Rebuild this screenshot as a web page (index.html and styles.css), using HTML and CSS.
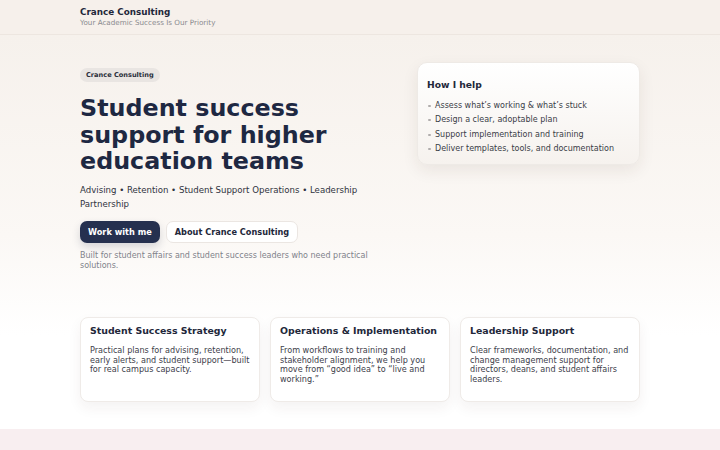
FILE: index.html
```html
<!DOCTYPE html>
<html lang="en">
<head>
<meta charset="utf-8">
<title>Crance Consulting</title>
<link rel="stylesheet" href="styles.css">
</head>
<body>
<header class="site-header">
  <div class="container">
    <div class="brand">Crance Consulting</div>
    <div class="tagline">Your Academic Success Is Our Priority</div>
  </div>
</header>
<main>
  <section class="hero">
    <div class="container hero-grid">
      <div class="hero-main">
        <span class="pill">Crance Consulting</span>
        <h1>Student success support for higher education teams</h1>
        <p class="lead">Advising • Retention • Student Support Operations • Leadership Partnership</p>
        <div class="actions">
          <a class="btn btn-primary" href="#">Work with me</a>
          <a class="btn btn-secondary" href="#">About Crance Consulting</a>
        </div>
        <p class="note">Built for student affairs and student success leaders who need practical solutions.</p>
      </div>
      <aside class="help-card">
        <h2>How I help</h2>
        <ul>
          <li>Assess what’s working &amp; what’s stuck</li>
          <li>Design a clear, adoptable plan</li>
          <li>Support implementation and training</li>
          <li>Deliver templates, tools, and documentation</li>
        </ul>
      </aside>
    </div>
    <div class="container features">
      <div class="feature">
        <h3>Student Success Strategy</h3>
        <p>Practical plans for advising, retention, early alerts, and student support—built for real campus capacity.</p>
      </div>
      <div class="feature">
        <h3>Operations &amp; Implementation</h3>
        <p>From workflows to training and stakeholder alignment, we help you move from “good idea” to “live and working.”</p>
      </div>
      <div class="feature">
        <h3>Leadership Support</h3>
        <p>Clear frameworks, documentation, and change management support for directors, deans, and student affairs leaders.</p>
      </div>
    </div>
  </section>
  <section class="band"></section>
</main>
</body>
</html>
```
FILE: styles.css
```css
* { box-sizing: border-box; }
html, body { margin: 0; padding: 0; }
body {
  font-family: "DejaVu Sans", "Liberation Sans", sans-serif;
  color: #2b2f3a;
  background: #ffffff;
}
.container {
  width: 560px;
  margin: 0 auto;
}
.site-header {
  background: #f6f0eb;
  border-bottom: 1px solid #ede6e0;
  height: 35px;
  padding-top: 6px;
}
.brand {
  font-size: 8.8px;
  font-weight: bold;
  color: #22273a;
  line-height: 12px;
}
.tagline {
  font-size: 7.2px;
  color: #8a8a8f;
  line-height: 10px;
}
.hero {
  background: linear-gradient(180deg, #f6f1ec 0px, #fbf8f5 200px, #ffffff 300px);
  padding-top: 27px;
  padding-bottom: 27px;
}
.hero-grid {
  display: grid;
  grid-template-columns: 1fr 223px;
  column-gap: 40px;
  align-items: start;
}
.hero-main {
  padding-top: 6px;
  display: flex;
  flex-direction: column;
  align-items: flex-start;
}
.pill {
  display: block;
  background: #e9e5e2;
  color: #2b2f3a;
  font-size: 6.6px;
  font-weight: bold;
  padding: 3px 6px;
  border-radius: 8px;
  line-height: 8px;
}
h1 {
  margin: 13.2px 0 0;
  font-size: 23.8px;
  line-height: 26.5px;
  color: #1e2842;
  font-weight: bold;
}
.lead {
  margin: 8.3px 0 0;
  font-size: 8.6px;
  line-height: 14px;
  color: #2f3340;
}
.actions {
  display: flex;
  gap: 6px;
  margin-top: 10px;
}
.btn {
  display: block;
  font-size: 8.2px;
  font-weight: bold;
  text-decoration: none;
  padding: 0 8px;
  height: 22px;
  line-height: 22px;
  border-radius: 7px;
}
.btn-primary {
  background: #25304f;
  color: #ffffff;
  box-shadow: 0 4px 8px rgba(37, 48, 79, 0.18);
}
.btn-secondary {
  background: #ffffff;
  color: #22273a;
  border: 1px solid #ebe6e2;
  line-height: 20px;
}
.note {
  margin: 8px 0 0;
  font-size: 8px;
  line-height: 10px;
  color: #80828a;
}
.help-card {
  background: linear-gradient(180deg, #ffffff 0%, #f6f2ee 100%);
  border: 1px solid #eeeae6;
  border-radius: 10px;
  padding: 15px 9px 9px;
  box-shadow: 0 6px 16px rgba(60, 40, 30, 0.08);
  height: 103px;
}
.help-card h2 {
  margin: 0 0 6.5px;
  font-size: 9.2px;
  line-height: 14px;
  color: #22273a;
}
.help-card ul {
  list-style: none;
  margin: 0;
  padding: 0;
}
.help-card li {
  font-size: 8px;
  line-height: 14.5px;
  color: #3a3d47;
  padding-left: 8px;
  position: relative;
}
.help-card li::before {
  content: "";
  position: absolute;
  left: 1px;
  top: 6px;
  width: 2.5px;
  height: 2px;
  border-radius: 1px;
  background: #b0adac;
}
.features {
  display: grid;
  grid-template-columns: repeat(3, 1fr);
  gap: 10px;
  margin-top: 46px;
}
.feature {
  background: #ffffff;
  border: 1px solid #efebe8;
  border-radius: 8px;
  padding: 6px 8px 10px 9px;
  height: 85px;
  box-shadow: 0 6px 14px rgba(60, 40, 30, 0.06);
}
.feature h3 {
  margin: 0;
  font-size: 9.4px;
  line-height: 14px;
  color: #22273a;
}
.feature p {
  margin: 8px 0 0;
  font-size: 8.1px;
  line-height: 9.7px;
  color: #3d404a;
}
.band {
  background: #f8eef0;
  height: 40px;
}
```
